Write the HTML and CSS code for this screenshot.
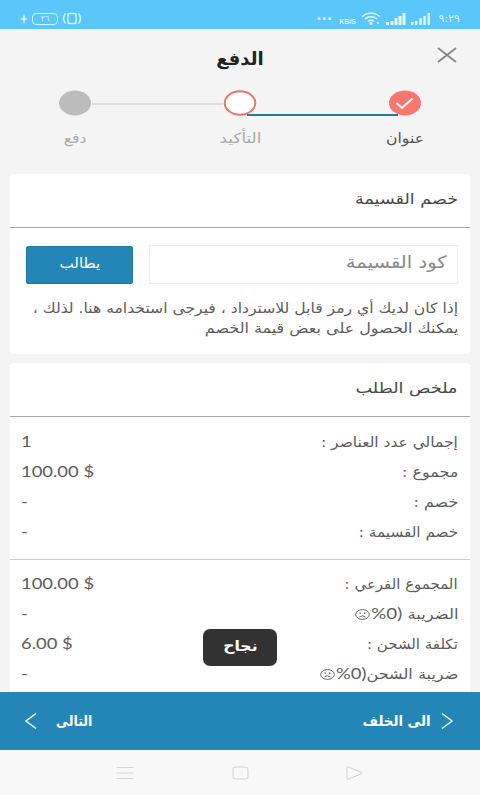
FILE: index.html
```html
<!DOCTYPE html>
<html lang="ar" dir="rtl">
  <head>
    <meta charset="utf-8">
    <title>الدفع</title>
    <link rel="stylesheet" href="styles.css">
  </head>
  <body>
    <div class="statusbar">
      <div class="status-right">
        <span class="clock">٩:٢٩</span>
        <svg width="20" height="12" viewBox="0 0 20 12"><path d="M0 9h2.500v3H0zM4 8h2.500v4H4zM8.300 5h2.500v7H8.300zM12.300 3h2.500v9h-2.500zM16.500 0h2.500v12h-2.500z" fill="#d8f7ff"/></svg>
        <svg width="20" height="12" viewBox="0 0 20 12"><path d="M0 9h3v3H0zM4.500 8h3v4h-3zM8.500 5h3v7h-3zM12.500 3h3v9h-3zM16.500 0h3v12h-3z" fill="#e4fbff"/></svg>
        <svg width="20" height="13" viewBox="0 0 20 13" fill="none" stroke="#e4fbff" stroke-width="1.500"><path d="M1 4.500Q10-2.500 19 4.500M4 7Q10 2.500 16 7M7 9.500Q10 7 13 9.500"/><circle cx="10" cy="11.500" r=".8"/><path d="M16 11h2"/></svg>
        <span class="kbs">KB/S</span>
        <span class="dots">···</span>
      </div>
      <div class="status-left">
        <svg width="20" height="13" viewBox="0 0 20 13" fill="none" stroke="#c9fbff" stroke-width="1.500"><rect x="6" y="1.500" width="8" height="10" rx="1"/><path d="M3.500 1.500Q-.5 6.500 3.500 11.500M16.500 1.500Q20.500 6.500 16.500 11.500"/></svg>
        <span class="battery">٢٦</span>
        <svg width="8" height="10" viewBox="0 0 8 10"><path d="M4 0L5 4L8 5L5 6L4 10L3 6L0 5L3 4z" fill="#e4fbff"/></svg>
      </div>
    </div>

    <header>
      <h1>الدفع</h1>
      <svg class="close" width="20" height="16" viewBox="0 0 20 16"><path d="M1 1L19 15M19 1L1 15" stroke="#858585" stroke-width="1.700"/></svg>
    </header>

    <div class="steps">
      <div class="step active">
        <svg width="34" height="26" viewBox="0 0 34 26"><ellipse cx="17" cy="13" rx="16" ry="12.500" fill="#f9776f"/><path d="M8.500 13L14 18L24.500 8.500" fill="none" stroke="#fff" stroke-width="2"/></svg>
        <span class="w-s1">عنوان</span>
      </div>
      <i class="line done"></i>
      <div class="step">
        <svg width="34" height="26" viewBox="0 0 34 26"><ellipse cx="17" cy="13" rx="15.300" ry="11.700" fill="#fff" stroke="#e8716c" stroke-width="1.900"/></svg>
        <span class="w-s2">التأكيد</span>
      </div>
      <i class="line"></i>
      <div class="step">
        <svg width="34" height="26" viewBox="0 0 34 26"><ellipse cx="17" cy="13" rx="16" ry="12.500" fill="#bcbcbc"/></svg>
        <span class="w-s3">دفع</span>
      </div>
    </div>

    <main>
      <section class="card coupon">
        <h2><span class="w-h1">خصم القسيمة</span></h2>
        <div class="coupon-form">
          <div class="field"><span class="w-field">كود القسيمة</span></div>
          <div class="claim"><span class="w-claim">يطالب</span></div>
        </div>
        <p><span class="w-p1">إذا كان لديك أي رمز قابل للاسترداد ، فيرجى استخدامه هنا. لذلك ،</span><span class="w-p2">يمكنك الحصول على بعض قيمة الخصم</span></p>
      </section>

      <section class="card summary">
        <h2><span class="w-h2">ملخص الطلب</span></h2>
        <div class="rows">
          <div class="row"><span class="w-r1">إجمالي عدد العناصر :</span><b>1</b></div>
          <div class="row"><span class="w-r2">مجموع :</span><b>100.00 $</b></div>
          <div class="row"><span class="w-r2">خصم :</span><b>-</b></div>
          <div class="row"><span class="w-r4">خصم القسيمة :</span><b>-</b></div>
        </div>
        <div class="rows totals">
          <div class="row"><span class="w-r5">المجموع الفرعي :</span><b>100.00 $</b></div>
          <div class="row"><span class="w-tax">الضريبة <em>(0%</em></span><svg class="face" width="15" height="11" viewBox="0 0 15 11"><g fill="none" stroke="#666"><ellipse cx="7.500" cy="5.500" rx="6.800" ry="4.900"/><path d="M4.500 8Q7.500 5.500 10.500 8"/></g><path d="M4.500 3.500h1.500v1.300H4.500zM9 3.500h1.500v1.300H9z" fill="#666"/></svg><b>-</b></div>
          <div class="row"><span class="w-r5">تكلفة الشحن :</span><b>6.00 $</b></div>
          <div class="row"><span class="w-shiptax">ضريبة الشحن<em>(0%</em></span><svg class="face ship" width="15" height="11" viewBox="0 0 15 11"><g fill="none" stroke="#666"><ellipse cx="7.500" cy="5.500" rx="6.800" ry="4.900"/><path d="M4.500 8Q7.500 5.500 10.500 8"/></g><path d="M4.500 3.500h1.500v1.300H4.500zM9 3.500h1.500v1.300H9z" fill="#666"/></svg><b>-</b></div>
        </div>
      </section>
    </main>

    <div class="toast"><span class="w-toast">نجاح</span></div>

    <footer>
      <div class="back">
        <svg width="12" height="18" viewBox="0 0 12 18"><path d="M1 1.500L11 9L1 16.500" fill="none" stroke="#e6fbff" stroke-width="1.500"/></svg>
        <span class="w-back">الى الخلف</span>
      </div>
      <div class="next">
        <span class="w-next">التالى</span>
        <svg width="12" height="18" viewBox="0 0 12 18"><path d="M11 1.500L1 9L11 16.500" fill="none" stroke="#e6fbff" stroke-width="1.500"/></svg>
      </div>
    </footer>

    <nav>
      <svg width="18" height="14" viewBox="0 0 18 14"><path d="M1 1.500Q1 .5 2 .8L16 6.500Q17 7 16 7.500L2 13.200Q1 13.500 1 12.500z" fill="none" stroke="#cfcfcf"/></svg>
      <svg width="17" height="14" viewBox="0 0 17 14"><rect x="1" y="1" width="15" height="12" rx="2.500" fill="none" stroke="#cfcfcf"/></svg>
      <svg width="18" height="14" viewBox="0 0 18 14"><path d="M.5 1.500h17M.5 7h17M.5 12.500h17" stroke="#d4d4d4"/></svg>
    </nav>
  </body>
</html>
```

FILE: styles.css
```css
body {
  position: relative;
  display: flex;
  flex-direction: column;
  width: 480px;
  height: 795px;
  margin: 0;
  overflow: hidden;
  background: #f4f4f4;
  color: #5c5c5c;
  font-family: "DejaVu Sans", sans-serif;
  font-size: 14px;
}
svg {
  display: block;
  flex: none;
}
/* text is stretched from the side it is aligned to */
span {
  display: inline-block;
  white-space: nowrap;
  transform-origin: right center;
}
.w-s1, .w-s3, .w-toast {
  transform: scaleX(1.12);
  transform-origin: center;
}
.w-s2 {
  transform: scaleX(1.2);
  transform-origin: center;
}
.w-claim {
  transform: scaleX(1.08);
  transform-origin: center;
}
.w-h1 { transform: scaleX(1.17); }
.w-h2 { transform: scaleX(1.18); }
.w-field { transform: scaleX(1.15); }
.w-p1 { transform: scaleX(1.113); }
.w-p2 { transform: scaleX(1.14); }
.w-r1 { transform: scaleX(1.105); }
.w-r2 { transform: scaleX(1.14); }
.w-r4 { transform: scaleX(1.09); }
.w-r5 { transform: scaleX(1.07); }
.w-tax { transform: scaleX(1.17); }
.w-shiptax { transform: scaleX(1.15); }
.w-back { transform: scaleX(.95); }
.w-next {
  transform: scaleX(.9);
  transform-origin: left center;
}
.statusbar {
  height: 29px;
  flex: none;
  box-sizing: border-box;
  padding: 8px 20px 0 20px;
  display: flex;
  justify-content: space-between;
  align-items: center;
  background: #5bc6fa;
  color: #d8f7ff;
}
.status-right, .status-left {
  display: flex;
  align-items: center;
  gap: 5px;
}
.status-left {
  gap: 4px;
}
.clock {
  font-size: 11px;
  width: 24px;
}
.kbs {
  font: bold 7px "Liberation Sans", sans-serif;
  margin-top: 6px;
}
.dots {
  font-size: 14px;
  font-weight: bold;
  line-height: 12px;
  margin-right: 2px;
}
.battery {
  width: 24px;
  height: 10px;
  border: 1px solid #c9fbff;
  border-radius: 4px;
  font-size: 8px;
  line-height: 10px;
  text-align: center;
}
header {
  height: 61px;
  flex: none;
  position: relative;
  text-align: center;
}
h1 {
  margin: 0;
  padding-top: 16px;
  font-size: 18px;
  line-height: 28px;
  color: #222;
}
.close {
  position: absolute;
  top: 18px;
  right: 23px;
}
.steps {
  height: 84px;
  flex: none;
  display: flex;
  padding: 0 58px 0 57px;
}
.step {
  width: 34px;
  position: relative;
  z-index: 1;
  display: flex;
  flex-direction: column;
  align-items: center;
  color: #aaa;
}
.step span {
  margin-top: 12px;
  line-height: 20px;
}
.step.active {
  color: #555;
}
.line {
  flex: 0 0 131px;
  height: 2px;
  margin-top: 13px;
  background: #ddd;
}
.line.done {
  flex-basis: 151px;
  margin: 24px -10px 0 -10px;
  background: #2279a5;
}
main {
  height: 518px;
  flex: none;
  overflow: hidden;
  padding: 0 10px;
}
.card {
  background: #fff;
  border-radius: 4px;
}
.coupon {
  height: 180px;
  margin-bottom: 9px;
}
.summary {
  height: 340px;
}
h2 {
  margin: 0;
  height: 54px;
  box-sizing: border-box;
  padding: 0 12px;
  border-bottom: 1px solid #aaa;
  font-size: 15px;
  font-weight: normal;
  line-height: 50px;
  color: #484848;
}
.coupon-form {
  display: flex;
  gap: 16px;
  padding: 17px 12px 0 16px;
}
.field {
  flex: 1;
  height: 37px;
  border: 1px solid #eee;
  padding: 0 10px;
  line-height: 33px;
  font-size: 17px;
  color: #888;
}
.claim {
  width: 105px;
  height: 36px;
  margin-top: 1px;
  border: 1px solid #1d7ba8;
  border-radius: 2px;
  background: #2386b6;
  color: #fff;
  text-align: center;
  line-height: 33px;
}
p {
  margin: 14px 12px 0;
  line-height: 20px;
}
p span {
  display: block;
  width: max-content;
}
.rows {
  padding: 10px 12px 12px;
  border-bottom: 1px solid #ccc;
}
.totals {
  padding-top: 9px;
}
.row {
  height: 30px;
  display: flex;
  align-items: center;
  line-height: 30px;
}
.row b {
  margin-right: auto;
  direction: ltr;
  font: 16px/28px Lato, sans-serif;
  transform-origin: left center;
  transform: translate(-1px, -1px) scaleX(1.15);
}
.row em {
  font: 16px/1 Lato, sans-serif;
}
.face {
  margin-right: 14px;
}
.face.ship {
  margin-right: 17px;
}
.toast {
  position: absolute;
  top: 629px;
  left: 203px;
  width: 74px;
  height: 37px;
  border-radius: 7px;
  background: #323232;
  color: #fff;
  font-size: 14px;
  font-weight: bold;
  line-height: 35px;
  text-align: center;
}
footer {
  height: 58px;
  flex: none;
  box-sizing: border-box;
  padding: 0 27px 0 25px;
  display: flex;
  justify-content: space-between;
  background: #2386b6;
  color: #fff;
  font-size: 14px;
  font-weight: bold;
}
.back, .next {
  display: flex;
  align-items: center;
}
.back {
  gap: 10px;
}
.next {
  gap: 19px;
}
nav {
  height: 45px;
  flex: none;
  box-sizing: border-box;
  padding: 0 116px;
  display: flex;
  justify-content: space-between;
  align-items: center;
  background: #f8f8f8;
}
```
